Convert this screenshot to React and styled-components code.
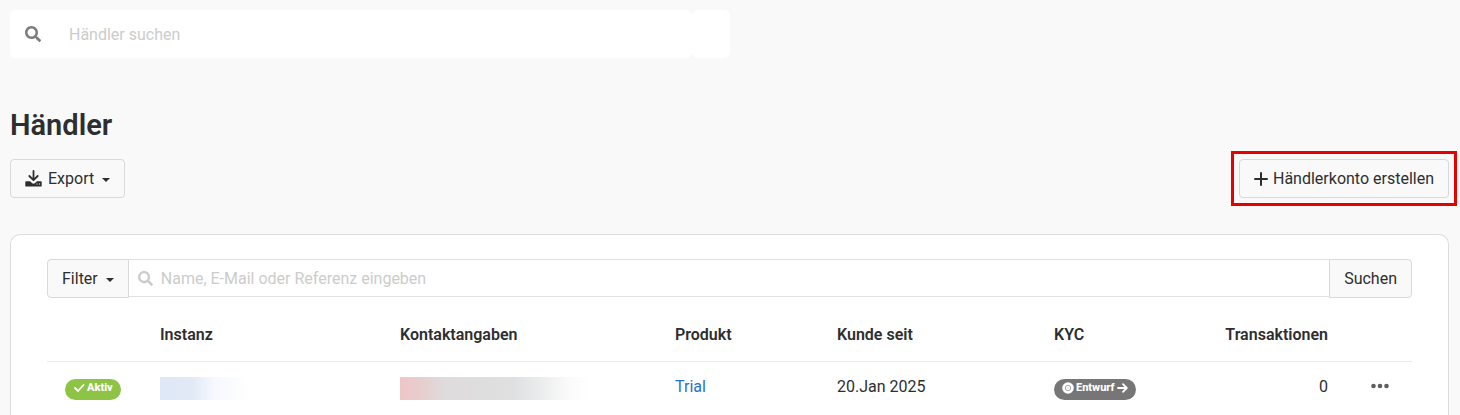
import React from "react";
import styled, { createGlobalStyle, css } from "styled-components";
import { FaSearch } from "react-icons/fa";

const GlobalStyle = createGlobalStyle`
  *, *::before, *::after { box-sizing: border-box; }
  body {
    margin: 0;
    background: #f9f9f9;
    color: #2d2e30;
    font-family: Roboto, "Liberation Sans", sans-serif;
    font-size: 16px;
    line-height: 24px;
  }
  button, input { font: inherit; color: inherit; }
`;

const Page = styled.main`
  display: flex;
  flex-direction: column;
  min-height: 100vh;
  padding: 10px 11px 0 10px;
`;

const GlobalSearch = styled.form`
  display: flex;
  width: 50%;
  height: 48px;
`;

const GlobalSearchField = styled.label`
  display: flex;
  flex: 1;
  align-items: center;
  gap: 28px;
  padding-left: 15px;
  border-radius: 6px;
  background: #fff;
  color: #7d7d7d;
`;

const GlobalSearchEnd = styled.div`
  width: 38px;
  border-radius: 6px;
  background: #fff;
`;

const TextInput = styled.input`
  flex: 1;
  min-width: 0;
  padding: 2px 0 0;
  border: 0;
  outline: 0;
  background: transparent;
  color: #2d2e30;
  &::placeholder { color: #ccc; opacity: 1; }
`;

const Title = styled.h1`
  margin: 49px 0 16px;
  font-size: 29px;
  line-height: 36px;
  font-weight: 600;
`;

const Toolbar = styled.div`
  display: flex;
  justify-content: space-between;
  margin-bottom: 36px;
`;

const Button = styled.button`
  display: flex;
  align-items: center;
  gap: ${({ $gap = 6 }) => $gap}px;
  height: 39px;
  padding: 0 14px;
  border: 1px solid #d8d9da;
  border-radius: 4px;
  background: #f9f9f9;
  white-space: nowrap;
  cursor: pointer;
  ${({ $side }) => $side === "left" && css`border-radius: 4px 0 0 4px;`}
  ${({ $side }) => $side === "right" && css`border-radius: 0 4px 4px 0;`}
`;

const Caret = styled.span`
  margin: 2px 0 0 2px;
  border: 4px solid transparent;
  border-top-color: currentColor;
  border-bottom: 0;
`;

const Highlight = styled.div`
  position: relative;
  &::after {
    content: "";
    position: absolute;
    inset: -8px;
    border: 3px solid #e60000;
    pointer-events: none;
  }
`;

const Panel = styled.section`
  flex: 1;
  padding: 24px 36px 0;
  border: 1px solid #dcddde;
  border-bottom: 0;
  border-radius: 10px 10px 0 0;
  background: #fff;
`;

const FilterBar = styled.form`
  display: flex;
  align-items: flex-start;
`;

const FilterField = styled.label`
  display: flex;
  flex: 1;
  align-items: center;
  gap: 8px;
  height: 38px;
  padding-left: 9px;
  border: solid #e2e2e3;
  border-width: 1px 0;
  color: #ccc;
`;

const Table = styled.table`
  width: 100%;
  table-layout: fixed;
  border-collapse: collapse;
`;

const cell = css`
  padding: 0 18px;
  text-align: ${({ $right }) => ($right ? "right" : "left")};
  white-space: nowrap;
`;

const HeadCell = styled.th`
  ${cell}
  height: 63px;
  padding-top: 11px;
  border-bottom: 1px solid #ebebeb;
  font-weight: 600;
  width: ${({ $width }) => $width}px;
`;

const Cell = styled.td`
  ${cell}
  height: 51px;
`;

const Link = styled.a`
  color: #2a71d0;
  text-decoration: none;
`;

const Badge = styled.span`
  display: flex;
  align-items: center;
  gap: 2px;
  width: max-content;
  height: 21px;
  margin-top: 5px;
  padding: 0 8px 2px;
  border-radius: 11px;
  background: ${({ $color }) => $color};
  color: #fff;
  font-size: 11px;
  font-weight: 800;
  line-height: 18px;
`;

const Redacted = styled.div`
  width: ${({ $width }) => $width}px;
  height: 23px;
  margin: 3px 0 0;
  background: linear-gradient(to right, ${({ $stops }) => $stops});
`;

const MenuButton = styled.button`
  display: flex;
  padding: 0 7px 2px;
  border: 0;
  background: none;
  color: #5b5d60;
  cursor: pointer;
`;

const DownloadIcon = () => (
  <svg width="17" height="17" viewBox="0 0 17 17" aria-hidden="true">
    <path d="M8.500 1v9M4.300 6l4.200 4.200L12.700 6" fill="none" stroke="currentColor" strokeWidth="1.800" strokeLinecap="round" strokeLinejoin="round" />
    <path
      fill="currentColor"
      fillRule="evenodd"
      d="M1 11.300h4l2 1.700a2.300 2.300 0 0 0 3 0l2-1.700H16a.7.7 0 0 1 .7.7v3.700a.9.900 0 0 1-.9.900H1.200a.9.9 0 0 1-.9-.9V12a.7.7 0 0 1 .7-.7zm10.500 2.300v1h1v-1zm2.500 0v1h1v-1z"
    />
  </svg>
);

const PlusIcon = () => (
  <svg width="14" height="14" viewBox="0 0 14 14" aria-hidden="true">
    <path d="M7 1v12M1 7h12" stroke="currentColor" strokeWidth="2" strokeLinecap="round" />
  </svg>
);

const CheckIcon = () => (
  <svg width="12" height="10" viewBox="0 0 12 10" aria-hidden="true">
    <path d="M2 5l3 3 5.500-6" fill="none" stroke="currentColor" strokeWidth="1.800" strokeLinecap="round" />
  </svg>
);

const DraftIcon = () => (
  <svg width="12" height="12" viewBox="0 0 12 12" aria-hidden="true">
    <circle cx="6" cy="6" r="5.800" fill="#fff" />
    <circle cx="6" cy="6" r="2.700" fill="none" stroke="#a3a9ae" strokeWidth="1" />
    <circle cx="6" cy="6" r="0.800" fill="#ccc" />
  </svg>
);

const ArrowIcon = () => (
  <svg width="11" height="10" viewBox="0 0 11 10" aria-hidden="true">
    <path d="M1 5h8.500M6 1.200L9.800 5 6 8.800" fill="none" stroke="currentColor" strokeWidth="1.800" strokeLinecap="round" strokeLinejoin="round" />
  </svg>
);

const DotsIcon = () => (
  <svg width="18" height="6" viewBox="0 0 18 6" fill="currentColor" aria-hidden="true">
    <circle cx="2.500" cy="3" r="2.300" />
    <circle cx="9" cy="3" r="2.300" />
    <circle cx="15.500" cy="3" r="2.300" />
  </svg>
);

const columns = [
  { label: "", width: 95 },
  { label: "Instanz", width: 240 },
  { label: "Kontaktangaben", width: 275 },
  { label: "Produkt", width: 162 },
  { label: "Kunde seit", width: 217 },
  { label: "KYC", width: 156 },
  { label: "Transaktionen", width: 154, right: true },
  { label: "", width: 66 },
];

const stop = (event) => event.preventDefault();

export default function App() {
  return (
    <>
      <GlobalStyle />
      <Page>
        <GlobalSearch onSubmit={stop}>
          <GlobalSearchField>
            <FaSearch size={16} aria-hidden="true" />
            <TextInput aria-label="Händler suchen" placeholder="Händler suchen" />
          </GlobalSearchField>
          <GlobalSearchEnd />
        </GlobalSearch>

        <Title>Händler</Title>
        <Toolbar>
          <Button type="button">
            <DownloadIcon />
            Export
            <Caret />
          </Button>
          <Highlight>
            <Button type="button" $gap={5}>
              <PlusIcon />
              Händlerkonto erstellen
            </Button>
          </Highlight>
        </Toolbar>

        <Panel>
          <FilterBar onSubmit={stop}>
            <Button type="button" $side="left">
              Filter
              <Caret />
            </Button>
            <FilterField>
              <FaSearch size={15} aria-hidden="true" />
              <TextInput
                aria-label="Name, E-Mail oder Referenz eingeben"
                placeholder="Name, E-Mail oder Referenz eingeben"
              />
            </FilterField>
            <Button type="submit" $side="right">Suchen</Button>
          </FilterBar>

          <Table>
            <thead>
              <tr>
                {columns.map((column, index) => (
                  <HeadCell key={index} scope="col" $width={column.width} $right={column.right}>
                    {column.label}
                  </HeadCell>
                ))}
              </tr>
            </thead>
            <tbody>
              <tr>
                <Cell>
                  <Badge $color="#8dc445"><CheckIcon />Aktiv</Badge>
                </Cell>
                <Cell>
                  <Redacted $width={90} $stops="#dfe8f8, #e1e9f6 35%, #f6f8fe 60%, #fff" />
                </Cell>
                <Cell>
                  <Redacted $width={190} $stops="#efc6c7, #e8cccd 10%, #dedbdc 23%, #dfe0e1 60%, #eaebec 73%, #fafafa 88%, #fff" />
                </Cell>
                <Cell><Link href="#trial">Trial</Link></Cell>
                <Cell>20.Jan 2025</Cell>
                <Cell>
                  <Badge $color="#767676"><DraftIcon />Entwurf<ArrowIcon /></Badge>
                </Cell>
                <Cell $right>0</Cell>
                <Cell>
                  <MenuButton type="button" aria-label="Aktionen">
                    <DotsIcon />
                  </MenuButton>
                </Cell>
              </tr>
            </tbody>
          </Table>
        </Panel>
      </Page>
    </>
  );
}
